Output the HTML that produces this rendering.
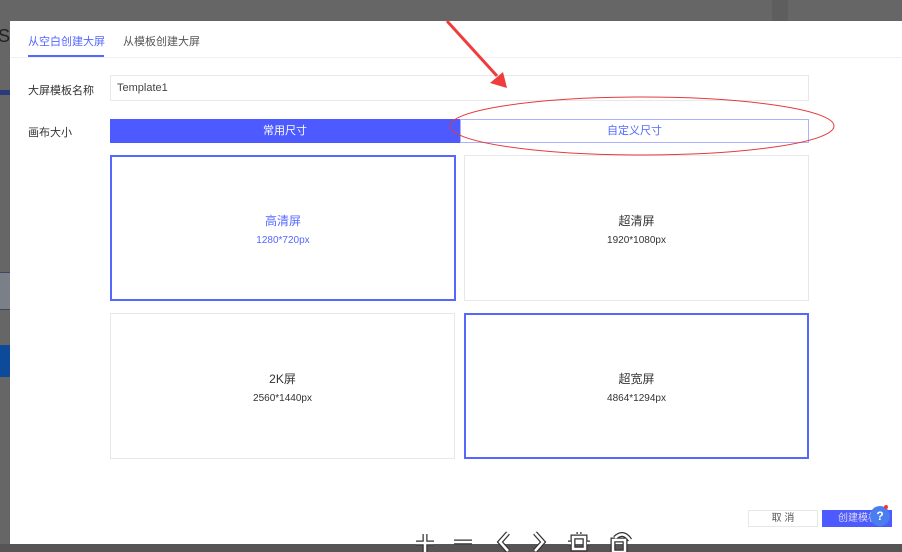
<!DOCTYPE html>
<html><head><meta charset="utf-8"><style>
*{margin:0;padding:0;box-sizing:border-box}
body{width:902px;height:552px;overflow:hidden;background:#666;font-family:"Liberation Sans","Noto Sans CJK SC",sans-serif;position:relative}
.abs{position:absolute}
.dlg{left:10px;top:21px;width:892px;height:523px;background:#fff}
.t{font-size:11px;color:#333}
.card{position:absolute;border:1px solid #e8e8e8;background:#fff;text-align:center}
.card.sel{border:2px solid #5468ff}
.card .n{font-size:12px;color:#333;margin-top:55px}
.card .s{font-size:10px;color:#333;margin-top:6px}
.card.sel.b .n,.card.sel.b .s{color:#5468ff}
</style></head><body>
<div class="abs" style="left:0;top:21px;width:10px;height:523px;background:#666"></div>
<div class="abs" style="left:-2px;top:26px;font-size:18px;color:#222">S</div>
<div class="abs" style="left:0;top:90px;width:10px;height:5px;background:#2a3a7a"></div>
<div class="abs" style="left:0;top:272px;width:10px;height:38px;background:#7a7f88;border-top:1px solid #446;border-bottom:1px solid #446"></div>
<div class="abs" style="left:0;top:345px;width:10px;height:32px;background:#0d4a9a"></div>
<div class="abs" style="left:772px;top:0;width:16px;height:21px;background:#5e5e5e"></div>
<div class="abs dlg"></div>
<div class="abs" style="left:28px;top:33px;font-size:11px;color:#5468ff">从空白创建大屏</div>
<div class="abs" style="left:28px;top:55px;width:76px;height:2px;background:#5468ff"></div>
<div class="abs" style="left:123px;top:33px;font-size:11px;color:#555">从模板创建大屏</div>
<div class="abs" style="left:10px;top:57px;width:892px;height:1px;background:#f0f0f0"></div>
<div class="abs t" style="left:28px;top:82px">大屏模板名称</div>
<div class="abs" style="left:110px;top:75px;width:699px;height:26px;border:1px solid #e8e8e8;font-size:11px;color:#444;padding:6px 6px">Template1</div>
<div class="abs t" style="left:28px;top:124px">画布大小</div>
<div class="abs" style="left:110px;top:119px;width:350px;height:24px;background:#4c5aff;color:#fff;font-size:11px;text-align:center;line-height:24px">常用尺寸</div>
<div class="abs" style="left:460px;top:119px;width:349px;height:24px;border:1px solid #aab2ff;color:#5468ff;font-size:11px;text-align:center;line-height:22px">自定义尺寸</div>
<div class="card sel b" style="left:110px;top:155px;width:346px;height:146px"><div class="n" style="margin-top:55px">高清屏</div><div class="s">1280*720px</div></div>
<div class="card" style="left:464px;top:155px;width:345px;height:146px"><div class="n" style="margin-top:56px">超清屏</div><div class="s">1920*1080px</div></div>
<div class="card" style="left:110px;top:313px;width:345px;height:146px"><div class="n" style="margin-top:56px">2K屏</div><div class="s">2560*1440px</div></div>
<div class="card sel" style="left:464px;top:313px;width:345px;height:146px"><div class="n" style="margin-top:55px">超宽屏</div><div class="s">4864*1294px</div></div>
<div class="abs" style="left:748px;top:510px;width:70px;height:17px;border:1px solid #e8e8e8;font-size:10px;color:#555;text-align:center;line-height:15px">取 消</div>
<div class="abs" style="left:822px;top:510px;width:70px;height:17px;background:#4c5aff;font-size:10px;color:#dde;line-height:17px;padding-left:16px">创建模板</div>
<div class="abs" style="left:870px;top:506px;width:20px;height:20px;border-radius:50%;background:#4a7df0;color:#fff;font-size:12px;text-align:center;line-height:20px;font-weight:bold">?</div>
<div class="abs" style="left:884px;top:505px;width:4px;height:4px;border-radius:50%;background:#f33"></div>
<div class="abs" style="left:0;top:544px;width:902px;height:8px;background:#555"></div>
<svg class="abs" style="left:0;top:0" width="902" height="552">
<ellipse cx="642" cy="126" rx="192" ry="29" fill="none" stroke="#e63a3a" stroke-width="1"/>
<line x1="447" y1="21" x2="497" y2="76" stroke="#f03c3c" stroke-width="3"/>
<polygon points="490,83 503,72 507,88" fill="#f03c3c"/>
<defs><g id="ic" fill="none">
<path d="M425 534v18M416 543h18"/>
<path d="M454 542h18"/>
<path d="M508 533l-8 9 8 9"/>
<path d="M535 533l8 9-8 9"/>
<rect x="573" y="537" width="12" height="12"/>
<path d="M571 543h-3M587 543h3M579 534v-2"/>
<rect x="613" y="540" width="12" height="12"/>
<path d="M615 538q8-8 15 2"/>
</g></defs>
<use href="#ic" stroke="#333" stroke-width="5"/>
<use href="#ic" stroke="#fff" stroke-width="2.5"/>
</svg>
</body></html>
